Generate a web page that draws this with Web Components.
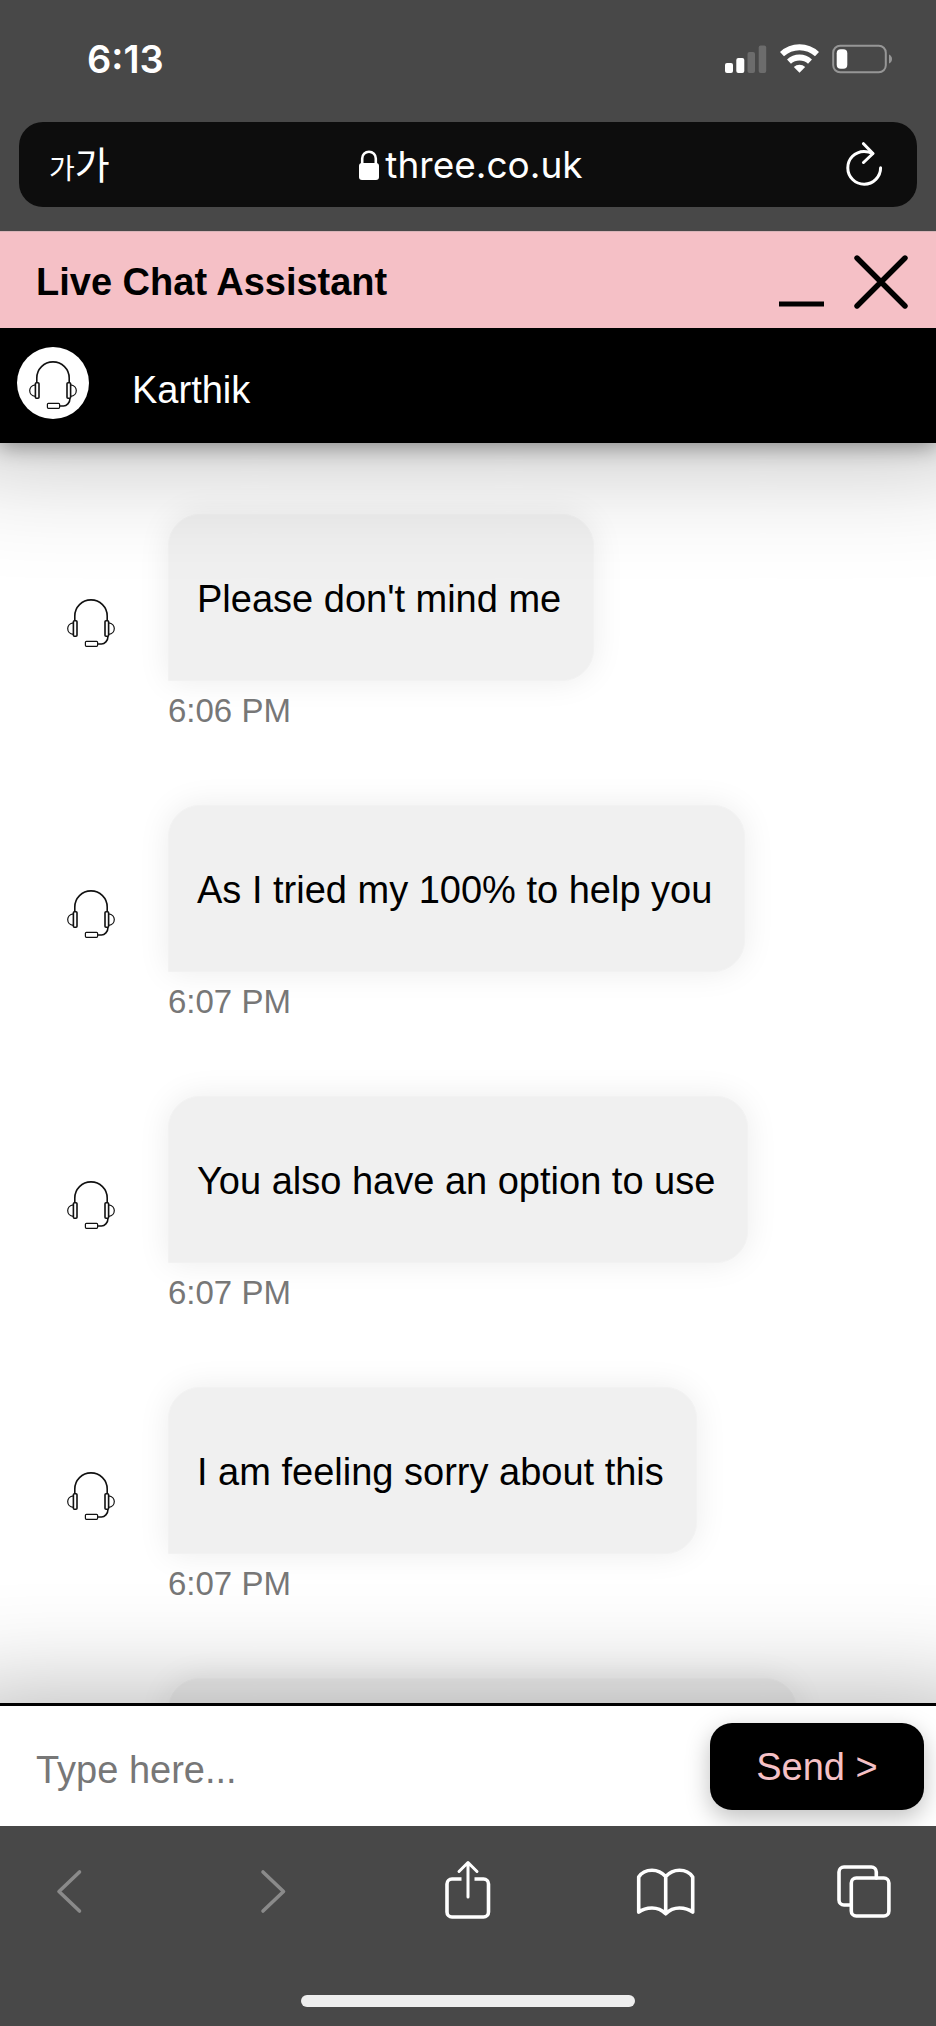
<!DOCTYPE html>
<html lang="en">
<head>
<meta charset="utf-8">
<meta name="viewport" content="width=device-width, initial-scale=1">
<title>Live Chat Assistant</title>
<style>
  html, body { margin: 0; height: 100%; }
  body {
    --chrome: #484848;
    --pink: #f5c0c6;
    --body-size: 38px;
    --small-size: 33px;
    --system-font: Inter, "Noto Sans CJK KR", sans-serif;
    background: var(--chrome);
    font-family: "Liberation Sans", Arial, sans-serif;
    font-size: var(--body-size);
    line-height: 46px;
    color: #000;
  }
</style>
</head>
<body>
<phone-app>
  <status-bar slot="top" time="6:13"></status-bar>
  <address-bar slot="top">three.co.uk</address-bar>
  <chat-window>
    <chat-title slot="header">Live Chat Assistant</chat-title>
    <agent-banner slot="header">Karthik</agent-banner>
    <chat-message time="6:06 PM">Please don't mind me</chat-message>
    <chat-message time="6:07 PM">As I tried my 100% to help you</chat-message>
    <chat-message time="6:07 PM">You also have an option to use</chat-message>
    <chat-message time="6:07 PM">I am feeling sorry about this</chat-message>
    <chat-message pending></chat-message>
    <chat-composer slot="footer"></chat-composer>
  </chat-window>
  <browser-toolbar slot="bottom"></browser-toolbar>
</phone-app>

<script>
const define = (name, render) => customElements.define(name, class extends HTMLElement {
  constructor() {
    super();
    this.attachShadow({ mode: 'open' });
  }
  connectedCallback() {
    this.shadowRoot.innerHTML = render(this);
  }
});

const resetButton = `button { appearance: none; border: 0; margin: 0; padding: 0; background: none; color: inherit; font: inherit; cursor: pointer; }
  svg { display: block; }`;

define('phone-app', () => `
  <style>
    :host { display: flex; flex-direction: column; height: 100vh; background: var(--chrome); }
    main { flex: 1; min-height: 0; display: flex; }
    ::slotted(chat-window) { flex: 1; min-width: 0; }
  </style>
  <slot name="top"></slot>
  <main><slot></slot></main>
  <slot name="bottom"></slot>`);

define('status-bar', el => `
  <style>
    :host { display: flex; align-items: center; justify-content: space-between; height: 118px; padding: 0 44px 4px 87px; color: #fff; font-family: var(--system-font); }
    time { font-size: 38px; font-weight: 600; }
    .icons { display: flex; align-items: center; gap: 13px; }
    svg { display: block; }
  </style>
  <time>${el.getAttribute('time')}</time>
  <div class="icons">
    <svg width="42" height="30" viewBox="0 0 42 30" fill="#fff" role="img" aria-label="Signal">
      <rect x="0" y="19" width="8" height="10" rx="2"/><rect x="11.3" y="14" width="8" height="15" rx="2"/>
      <rect x="22.5" y="8" width="7.5" height="21" rx="2" opacity=".2"/><rect x="33.7" y="1.5" width="7.5" height="27.5" rx="2" opacity=".2"/>
    </svg>
    <svg width="39" height="30" viewBox="0 0 39 30" role="img" aria-label="Wi-Fi">
      <g fill="none" stroke="#fff" stroke-width="5.8">
        <path d="M2 10.2A25.5 25.5 0 0 1 37 10.2"/><path d="M9 17.6A15.5 15.5 0 0 1 30 17.6"/>
      </g>
      <path d="M13.8 22.9A8.6 8.6 0 0 1 25.2 22.9L19.5 28.8Z" fill="#fff"/>
    </svg>
    <svg width="60" height="30" viewBox="0 0 60 30" role="img" aria-label="Battery">
      <rect x="1.2" y="1.7" width="52.6" height="26.6" rx="7" fill="none" stroke="#969696" stroke-width="2"/>
      <rect x="4.7" y="5.3" width="10.6" height="19.4" rx="4" fill="#fff"/>
      <path d="M57 10.5Q60 12 60 15T57 19.5Z" fill="#969696"/>
    </svg>
  </div>`);

define('address-bar', () => `
  <style>
    ${resetButton}
    :host { display: grid; grid-template-columns: 1fr auto 1fr; align-items: center; box-sizing: border-box; height: 85px; margin: 0 19px 24px; padding: 0 34px 0 30px; border-radius: 24px; background: #0d0d0d; color: #fff; font-family: var(--system-font); }
    .size { justify-self: start; display: flex; align-items: baseline; font-family: "Noto Sans CJK KR", sans-serif; font-size: 38px; }
    .size small { font-size: 28px; }
    .url { display: flex; align-items: center; gap: 6px; padding-left: 10px; font-size: 37px; }
    .reload { justify-self: end; }
  </style>
  <button class="size" lang="ko" aria-label="Text size"><small>가</small><span>가</span></button>
  <button class="url">
    <svg width="20" height="30" viewBox="0 0 20 30" aria-hidden="true">
      <rect x="0" y="13" width="20" height="17" rx="3" fill="#fff"/>
      <path d="M3.2 14V8.5a6.8 6.8 0 0 1 13.6 0V14" fill="none" stroke="#fff" stroke-width="2.6"/>
    </svg>
    <slot></slot>
  </button>
  <button class="reload" aria-label="Reload">
    <svg width="38" height="46" viewBox="0 0 38 46" fill="none" stroke="#fff" stroke-width="3" stroke-linecap="round" stroke-linejoin="round">
      <path d="M35.6 25.8A16.4 16.4 0 1 1 19 9.4Q24 9.4 27.5 11.5"/><path d="M18.5 1.7L28 11.5L18.5 20.5"/>
    </svg>
  </button>`);

define('headset-icon', () => `
  <style>
    :host { display: block; }
    svg { display: block; }
  </style>
  <svg width="48" height="48" viewBox="0 0 48 48" fill="none" stroke="#111" stroke-width="1.6" aria-hidden="true">
    <path d="M7.8 22V17C7.8 8 15 .9 24 .9S40.2 8 40.2 17V22"/>
    <rect x="6.4" y="21.8" width="3.6" height="15.4" rx="1"/><rect x="38" y="21.8" width="3.6" height="15.4" rx="1"/>
    <path d="M6.4 23.8C2.6 24.2.7 27 .7 29.6S2.6 35 6.4 35.4M41.6 23.8C45.4 24.2 47.3 27 47.3 29.6S45.4 35 41.6 35.4" stroke-width="1.2"/>
    <path d="M41 37.2C41 42 37.5 45 34.5 45H30.6"/>
    <rect x="18.4" y="42.3" width="12.2" height="5" rx="1" stroke-width="1.2"/>
  </svg>`);

define('chat-window', () => `
  <style>
    :host { display: flex; flex-direction: column; overflow: hidden; background: #fff; }
    header { position: relative; z-index: 1; }
    section { flex: 1; min-height: 0; overflow: hidden; display: flex; flex-direction: column; gap: 74px; padding: 71px 67px 0; }
    footer { position: relative; z-index: 1; }
  </style>
  <header><slot name="header"></slot></header>
  <section aria-label="Messages"><slot></slot></section>
  <footer><slot name="footer"></slot></footer>`);

define('chat-title', () => `
  <style>
    ${resetButton}
    :host { display: flex; align-items: center; justify-content: space-between; box-sizing: border-box; height: 97px; padding: 4px 28px 0 36px; border-top: 1px solid #d8b4b8; background: var(--pink); position: relative; z-index: 1; }
    h1 { margin: 0; font-size: var(--body-size); line-height: 46px; font-weight: 700; }
    .controls { display: flex; gap: 30px; }
  </style>
  <h1><slot></slot></h1>
  <div class="controls">
    <button aria-label="Minimise"><svg width="45" height="54" viewBox="0 0 45 54"><path d="M0 49H45" stroke="#000" stroke-width="5"/></svg></button>
    <button aria-label="Close"><svg width="54" height="54" viewBox="0 0 54 54"><path d="M3 3L51 51M51 3L3 51" stroke="#000" stroke-width="5.4" stroke-linecap="round"/></svg></button>
  </div>`);

define('agent-banner', () => `
  <style>
    :host { display: flex; align-items: center; gap: 43px; box-sizing: border-box; height: 115px; padding: 0 17px 6px; background: #000; color: #fff; box-shadow: 0 4px 20px rgba(0,0,0,.35), 0 -50px 120px 60px rgba(0,0,0,.28); }
    .avatar { display: grid; place-items: center; box-sizing: border-box; width: 72px; height: 72px; padding-top: 4px; border-radius: 50%; background: #fff; }
    .name { padding-top: 14px; }
  </style>
  <div class="avatar"><headset-icon></headset-icon></div>
  <div class="name"><slot></slot></div>`);

define('chat-message', el => {
  const pending = el.hasAttribute('pending');
  return `
  <style>
    :host { display: flex; flex: none; align-items: flex-start; gap: 53px; }
    headset-icon { padding-top: 85px; }
    .bubble { box-sizing: border-box; min-height: 167px; padding: 61px 32px 58px 28px; border: 1px solid #f2f2f2; border-radius: 32px 32px 32px 0; background: #f0f0f0; box-shadow: 0 0 32px rgba(0,0,0,.08); }
    .pending { width: 629px; }
    time { display: block; margin-top: 10px; font-size: var(--small-size); line-height: 40px; color: #777; }
  </style>
  <headset-icon></headset-icon>
  <div>
    <div class="bubble ${pending ? 'pending' : ''}"><slot></slot></div>
    ${pending ? '' : `<time>${el.getAttribute('time')}</time>`}
  </div>`;
});

define('chat-composer', () => `
  <style>
    ${resetButton}
    :host { display: block; box-shadow: 0 55px 110px 60px rgba(0,0,0,.3); }
    form { display: flex; align-items: center; gap: 24px; box-sizing: border-box; height: 123px; margin: 0; padding: 0 12px 0 36px; border-top: 3px solid #000; background: #fff; overflow: hidden; }
    input { flex: 1; min-width: 0; height: 80px; box-sizing: border-box; margin: 0; border: 0; padding: 8px 0 0; outline: 0; background: none; font: inherit; color: #000; }
    input::placeholder { color: #777; opacity: 1; }
    .send { width: 214px; height: 87px; padding-top: 2px; border-radius: 22px; background: #000; color: var(--pink); box-shadow: 0 8px 24px rgba(0,0,0,.25); }
  </style>
  <form onsubmit="return false">
    <input type="text" placeholder="Type here..." aria-label="Message">
    <button class="send">Send &gt;</button>
  </form>`);

define('browser-toolbar', () => `
  <style>
    ${resetButton}
    :host { display: flex; flex-direction: column; justify-content: space-between; align-items: center; box-sizing: border-box; height: 200px; padding: 33px 0 19px; background: var(--chrome); }
    nav { align-self: stretch; display: flex; justify-content: space-between; padding: 0 37px 0 34px; }
    button { display: grid; place-items: center; width: 70px; height: 64px; color: #fff; }
    button:disabled { color: #8a8a8a; }
    svg { fill: none; stroke: currentColor; stroke-width: 3.6; stroke-linecap: round; stroke-linejoin: round; }
    .home { width: 334px; height: 12px; border-radius: 6px; background: #eee; }
  </style>
  <nav aria-label="Browser">
    <button disabled aria-label="Back"><svg width="64" height="64" viewBox="0 0 64 64"><path d="M42.5 13L22 32.5L42.5 52"/></svg></button>
    <button disabled aria-label="Forward"><svg width="64" height="64" viewBox="0 0 64 64"><path d="M27 13L47.5 32.5L27 52"/></svg></button>
    <button aria-label="Share"><svg width="64" height="64" viewBox="0 0 64 64"><path d="M26.5 20H17a5 5 0 0 0-5 5V53a5 5 0 0 0 5 5H48.5a5 5 0 0 0 5-5V25a5 5 0 0 0-5-5H39.5" stroke-linecap="butt"/><path d="M33 38V3.5M24 12.5L33 3.5L42 12.5" stroke-width="3"/></svg></button>
    <button aria-label="Bookmarks"><svg width="64" height="64" viewBox="0 0 64 64"><path d="M32.7 17.5Q27 11.2 19 11.2Q10 11.2 5.7 18V53.2Q11 49 19 49Q27 49 32.7 54.8Q38.4 49 46.4 49Q54.4 49 59.7 53.2V18Q55.4 11.2 46.4 11.2Q38.4 11.2 32.7 17.5V54.8"/></svg></button>
    <button aria-label="Tabs"><svg width="64" height="64" viewBox="0 0 64 64"><rect x="19.3" y="19" width="37.6" height="38" rx="5"/><path d="M19.3 46H12a5 5 0 0 1-5-5V13a5 5 0 0 1 5-5H39.3a5 5 0 0 1 5 5V19"/></svg></button>
  </nav>
  <div class="home"></div>`);
</script>
</body>
</html>
